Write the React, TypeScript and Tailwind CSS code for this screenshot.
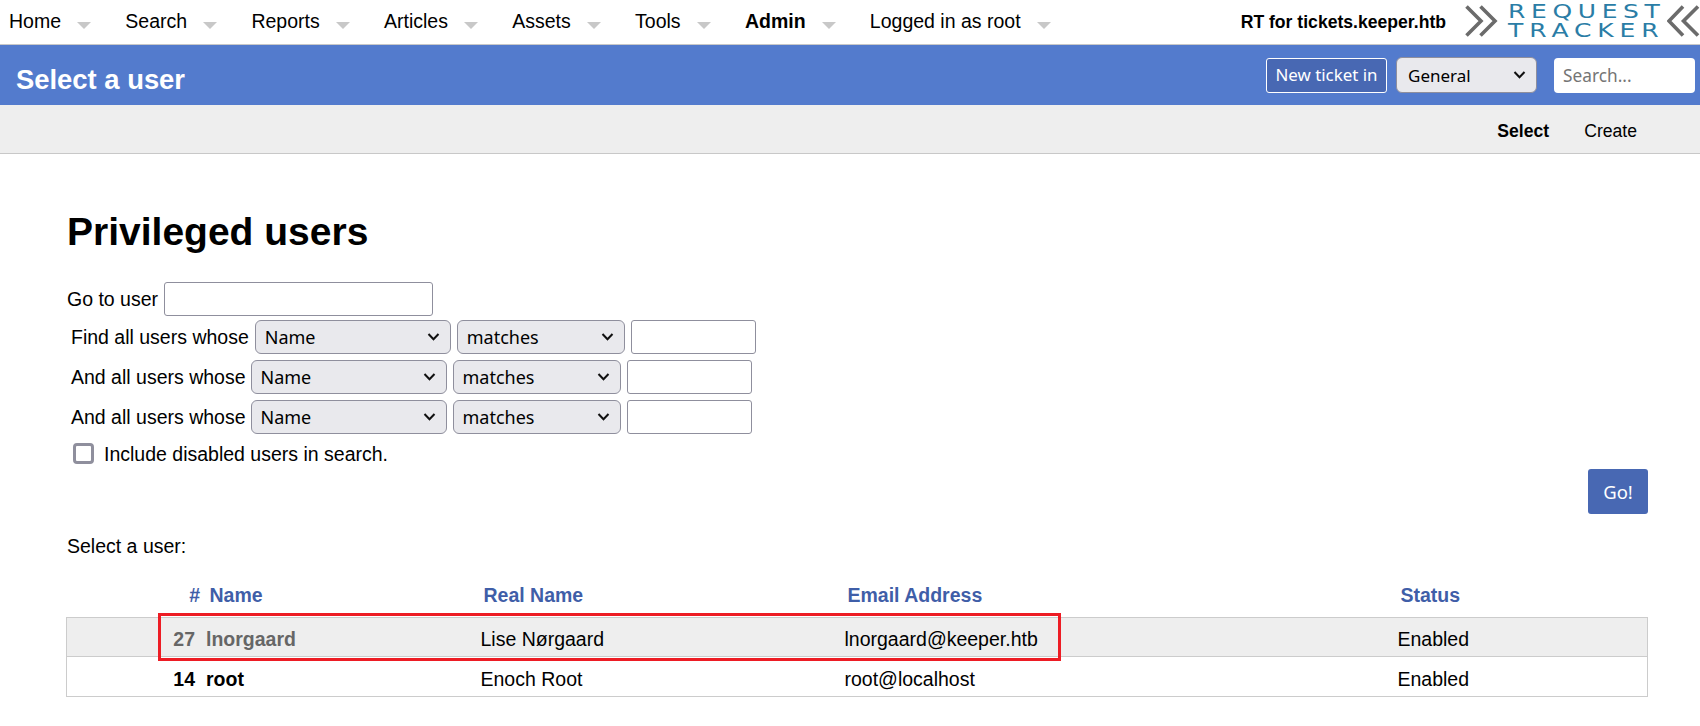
const navItems = [
  { label: "Home" },
  { label: "Search" },
  { label: "Reports" },
  { label: "Articles" },
  { label: "Assets" },
  { label: "Tools" },
  { label: "Admin", bold: true },
  { label: "Logged in as root" },
];

const users = [
  { id: 27, name: "lnorgaard", real: "Lise Nørgaard", email: "lnorgaard@keeper.htb", status: "Enabled", shaded: true },
  { id: 14, name: "root", real: "Enoch Root", email: "root@localhost", status: "Enabled", shaded: false },
];

const formFont = "font-['Noto_Sans',sans-serif]";

function Chevron() {
  return (
    <svg className="pointer-events-none absolute right-[11px] top-1/2 -translate-y-1/2" width="13" height="9" viewBox="0 0 13 9" fill="none">
      <path d="M1.5 1.5 L6.5 6.8 L11.5 1.5" stroke="#111" strokeWidth="2" />
    </svg>
  );
}

function Select({ value, className, pad = "pl-[9px] text-[18px]" }: { value: string; className: string; pad?: string }) {
  return (
    <div className={`relative ${className}`}>
      <select
        defaultValue={value}
        className={`h-full w-full appearance-none rounded-[6px] border border-[#8f8f9d] bg-[#e9e9ed] pt-[1px] text-black ${pad} ${formFont}`}
      >
        <option>{value}</option>
      </select>
      <Chevron />
    </div>
  );
}

function FilterRow({ label, gap = "mr-[5px]" }: { label: string; gap?: string }) {
  return (
    <div className="flex h-[34px] items-center pl-[5px]">
      <span className={`whitespace-nowrap pt-[2px] ${gap}`}>{label}</span>
      <Select value="Name" className="h-[34px] w-[196px]" />
      <Select value="matches" className="ml-[6px] h-[34px] w-[168px]" />
      <input className="ml-[6px] h-[34px] w-[125px] rounded-[3px] border border-[#8f8f9d] bg-white" />
    </div>
  );
}

function Logo() {
  return (
    <div className="flex h-[44px] items-center pb-[3px]">
      <svg width="34" height="32" viewBox="0 0 34 32" fill="none" stroke="#6b6b6b" strokeWidth="3.6">
        <path d="M1.5 1.5 L16 16 L1.5 30.5" />
        <path d="M15.5 1.5 L30 16 L15.5 30.5" />
      </svg>
      <div className="ml-[9px] mr-[7px] flex w-[152px] flex-col whitespace-nowrap font-['DejaVu_Sans',sans-serif] text-[20px] leading-[19px] font-normal text-[#2a7da6]">
        <span className="origin-left scale-x-[1.25] tracking-[4.5px]">REQUEST</span>
        <span className="origin-left scale-x-[1.25] tracking-[4.7px]">TRACKER</span>
      </div>
      <svg width="33" height="32" viewBox="0 0 33 32" fill="none" stroke="#6b6b6b" strokeWidth="3.6">
        <path d="M31 1.5 L16.5 16 L31 30.5" />
        <path d="M16 1.5 L2 16 L16 30.5" />
      </svg>
    </div>
  );
}

export default function App() {
  return (
    <div className="h-[726px] overflow-hidden bg-white font-['Liberation_Sans',sans-serif] text-[19.5px] text-black">
      <div className="flex h-[45px] items-center justify-between border-b border-[#c8c8c8] pl-[9px]">
        <div className="flex items-center gap-[34.3px]">
          {navItems.map((item) => (
            <div key={item.label} className="flex items-center">
              <span className={item.bold ? "font-bold" : ""}>{item.label}</span>
              <span className="mt-[6px] ml-[16px] h-0 w-0 border-x-[7px] border-t-[7px] border-x-transparent border-t-[#c8c8c8]" />
            </div>
          ))}
        </div>
        <div className="flex items-center">
          <span className="mr-[19px] pt-[1px] text-[17.6px] font-bold">RT for tickets.keeper.htb</span>
          <Logo />
        </div>
      </div>

      <div className="flex h-[60px] items-center justify-between bg-[#537bcd] pl-[16px] pr-[5px]">
        <h1 className="mt-[9px] text-[27.4px] font-bold text-white">Select a user</h1>
        <div className={`flex items-center ${formFont}`}>
          <button className="h-[35px] w-[121px] rounded-[3px] border border-white bg-[#4868b3] text-[16.9px] text-white">New ticket in</button>
          <Select value="General" className="ml-[9px] h-[36px] w-[141px]" pad="pl-[11px] text-[17px]" />
          <input
            placeholder="Search..."
            className="ml-[17px] h-[35px] w-[141px] rounded-[4px] bg-white px-[9px] pt-[1px] text-[17.3px] placeholder:text-[#757575]"
          />
        </div>
      </div>

      <div className="flex h-[49px] items-center justify-end gap-[35px] border-b border-[#c8c8c8] bg-[#eeeeee] pr-[63px] pt-[5px] text-[17.6px]">
        <span className="font-bold">Select</span>
        <span>Create</span>
      </div>

      <div className="pl-[66px] pr-[52px]">
        <h2 className="mt-[53px] pl-[1px] text-[39px] leading-[50px] font-bold">Privileged users</h2>

        <div className="mt-[25px] flex h-[34px] items-center pl-[1px]">
          <span className="mr-[6px] pt-[1px]">Go to user</span>
          <input className="h-[34px] w-[269px] rounded-[3px] border border-[#8f8f9d] bg-white" />
        </div>
        <div className="mt-[4px] flex flex-col gap-[6px]">
          <FilterRow label="Find all users whose" gap="mr-[6px]" />
          <FilterRow label="And all users whose" />
          <FilterRow label="And all users whose" />
        </div>
        <label className="mt-[9px] flex h-[21px] items-center pl-[7px]">
          <span className="h-[21px] w-[21px] rounded-[4px] border-[3px] border-[#8f8f9d] bg-white" />
          <span className="ml-[10px] pt-[2px]">Include disabled users in search.</span>
        </label>

        <div className="mt-[5px] flex justify-end">
          <button className={`h-[45px] w-[60px] rounded-[3px] bg-[#4868b3] text-[18.5px] text-white ${formFont}`}>Go!</button>
        </div>

        <p className="mt-[21px] pl-[1px] leading-[22px]">Select a user:</p>

        <div className="relative mt-[27px]">
          <div className="grid h-[33px] grid-cols-[140px_274.5px_364px_553px_1fr] items-start font-bold text-[#3f5ea8]">
            <span className="pr-[6px] text-right leading-[22px]">#</span>
            <span className="pl-[3.5px] leading-[22px]">Name</span>
            <span className="pl-[3px] leading-[22px]">Real Name</span>
            <span className="pl-[3px] leading-[22px]">Email Address</span>
            <span className="pl-[3px] leading-[22px]">Status</span>
          </div>
          <div className="border-x border-b border-[#cccccc]">
            {users.map((u) => (
              <div
                key={u.id}
                className={`grid grid-cols-[139px_274.5px_364px_553px_1fr] items-center border-t border-[#cccccc] pt-[6px] ${u.shaded ? "h-[39px] bg-[#eeeeee]" : "h-[40px] bg-white"}`}
              >
                <span className={`pr-[11px] text-right font-bold ${u.shaded ? "text-[#666666]" : ""}`}>{u.id}</span>
                <span className={`font-bold ${u.shaded ? "text-[#666666]" : ""}`}>{u.name}</span>
                <span>{u.real}</span>
                <span>{u.email}</span>
                <span>{u.status}</span>
              </div>
            ))}
          </div>
          <div className="absolute left-[92px] top-[29px] h-[48px] w-[903px] border-[3px] border-[#ed1c24]" />
        </div>
      </div>
    </div>
  );
}
